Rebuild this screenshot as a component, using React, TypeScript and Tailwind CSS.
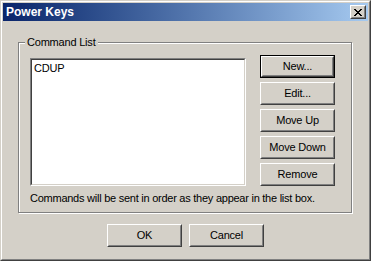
import React from "react";

const font = { fontFamily: '"Liberation Sans", Arial, sans-serif' };

function Btn({ label, def = false }: { label: string; def?: boolean }) {
  if (def) {
    return (
      <div className="w-[75px] h-[23px] border border-black">
        <div className="w-full h-full border border-t-white border-l-white border-r-[#404040] border-b-[#404040]">
          <div className="w-full h-full border border-t-[#d4d0c8] border-l-[#d4d0c8] border-r-[#808080] border-b-[#808080] flex items-center justify-center text-[11px] tracking-[-0.2px] text-black leading-none">
            {label}
          </div>
        </div>
      </div>
    );
  }
  return (
    <div className="w-[75px] h-[23px] border border-t-white border-l-white border-r-[#404040] border-b-[#404040]">
      <div className="w-full h-full border border-t-[#d4d0c8] border-l-[#d4d0c8] border-r-[#808080] border-b-[#808080] flex items-center justify-center text-[11px] tracking-[-0.2px] text-black leading-none">
        {label}
      </div>
    </div>
  );
}

export default function App() {
  return (
    <div
      className="w-[371px] h-[261px] bg-[#d4d0c8] border border-t-[#d4d0c8] border-l-[#d4d0c8] border-r-[#404040] border-b-[#404040]"
      style={font}
    >
      <div className="w-full h-full border border-t-white border-l-white border-r-[#808080] border-b-[#808080] p-px flex flex-col">
        <div className="h-[18px] flex items-center justify-between pl-[3px] pr-[2px] bg-linear-to-r from-[#0a246a] to-[#a6caf0]">
          <span className="text-white font-bold text-[12px] leading-none">Power Keys</span>
          <div className="w-[16px] h-[14px] border border-t-white border-l-white border-r-[#404040] border-b-[#404040] bg-[#d4d0c8]">
            <div className="w-full h-full border border-t-[#d4d0c8] border-l-[#d4d0c8] border-r-[#808080] border-b-[#808080] flex items-center justify-center">
              <svg width="8" height="7" viewBox="0 0 8 7" shapeRendering="crispEdges">
                <path d="M0 0h2v1H0zM6 0h2v1H6zM1 1h2v1H1zM5 1h2v1H5zM2 2h4v1H2zM3 3h2v1H3zM2 4h4v1H2zM1 5h2v1H1zM5 5h2v1H5zM0 6h2v1H0zM6 6h2v1H6z" fill="#000" />
              </svg>
            </div>
          </div>
        </div>
        <div className="flex flex-col pl-[15px] pt-[21px]">
          <div className="relative w-[334px] h-[171px] border border-[#808080] shadow-[inset_1px_1px_0_#fff,1px_1px_0_#fff]">
            <span className="absolute left-[6px] top-[-7px] px-[2px] bg-[#d4d0c8] text-[11px] tracking-[-0.2px] leading-[13px] text-black">
              Command List
            </span>
            <div className="flex items-start pt-[12px] pl-[11px]">
              <div className="mt-[3px] w-[216px] h-[128px] border border-t-[#808080] border-l-[#808080] border-r-white border-b-white">
                <div className="w-full h-full border border-t-[#404040] border-l-[#404040] border-r-[#d4d0c8] border-b-[#d4d0c8] bg-white pl-[2px] pt-[2px]">
                  <div className="text-[11px] tracking-[-0.2px] leading-[13px] text-black">CDUP</div>
                </div>
              </div>
              <div className="ml-[14px] flex flex-col gap-[4px]">
                <Btn label="New..." def />
                <Btn label="Edit..." />
                <Btn label="Move Up" />
                <Btn label="Move Down" />
                <Btn label="Remove" />
              </div>
            </div>
            <p className="pl-[11px] mt-[6px] text-[11px] tracking-[-0.25px] leading-[13px] text-black">
              Commands will be sent in order as they appear in the list box.
            </p>
          </div>
          <div className="flex gap-[7px] pl-[89px] mt-[11px]">
            <Btn label="OK" />
            <Btn label="Cancel" />
          </div>
        </div>
      </div>
    </div>
  );
}
